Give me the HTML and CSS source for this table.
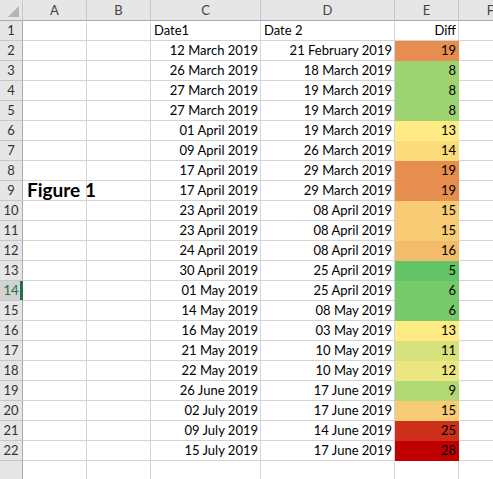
FILE: index.html
```html
<!DOCTYPE html>
<html>
<head>
<meta charset="utf-8">
<link rel="stylesheet" href="styles.css">
</head>
<body>
<div class="sheet">
  <div class="row head">
    <div class="c corner"><svg width="22" height="20" viewBox="0 0 22 20"><polygon points="19,6 19,17 8,17" fill="#b4b4b4"/></svg></div>
    <div class="c ch">A</div><div class="c ch">B</div><div class="c ch">C</div><div class="c ch">D</div><div class="c ch">E</div><div class="c ch">F</div>
  </div>
  <div class="row"><div class="c rh">1</div><div class="c"></div><div class="c"></div><div class="c">Date1</div><div class="c">Date 2</div><div class="c r">Diff</div><div class="c"></div></div>
  <div class="row"><div class="c rh">2</div><div class="c"></div><div class="c"></div><div class="c r">12 March 2019</div><div class="c r">21 February 2019</div><div class="c r fill v19">19</div><div class="c"></div></div>
  <div class="row"><div class="c rh">3</div><div class="c"></div><div class="c"></div><div class="c r">26 March 2019</div><div class="c r">18 March 2019</div><div class="c r fill v8">8</div><div class="c"></div></div>
  <div class="row"><div class="c rh">4</div><div class="c"></div><div class="c"></div><div class="c r">27 March 2019</div><div class="c r">19 March 2019</div><div class="c r fill v8">8</div><div class="c"></div></div>
  <div class="row"><div class="c rh">5</div><div class="c"></div><div class="c"></div><div class="c r">27 March 2019</div><div class="c r">19 March 2019</div><div class="c r fill v8">8</div><div class="c"></div></div>
  <div class="row"><div class="c rh">6</div><div class="c"></div><div class="c"></div><div class="c r">01 April 2019</div><div class="c r">19 March 2019</div><div class="c r fill v13">13</div><div class="c"></div></div>
  <div class="row"><div class="c rh">7</div><div class="c"></div><div class="c"></div><div class="c r">09 April 2019</div><div class="c r">26 March 2019</div><div class="c r fill v14">14</div><div class="c"></div></div>
  <div class="row"><div class="c rh">8</div><div class="c"></div><div class="c"></div><div class="c r">17 April 2019</div><div class="c r">29 March 2019</div><div class="c r fill v19">19</div><div class="c"></div></div>
  <div class="row"><div class="c rh">9</div><div class="c title">Figure 1</div><div class="c"></div><div class="c r">17 April 2019</div><div class="c r">29 March 2019</div><div class="c r fill v19">19</div><div class="c"></div></div>
  <div class="row"><div class="c rh">10</div><div class="c"></div><div class="c"></div><div class="c r">23 April 2019</div><div class="c r">08 April 2019</div><div class="c r fill v15">15</div><div class="c"></div></div>
  <div class="row"><div class="c rh">11</div><div class="c"></div><div class="c"></div><div class="c r">23 April 2019</div><div class="c r">08 April 2019</div><div class="c r fill v15">15</div><div class="c"></div></div>
  <div class="row"><div class="c rh">12</div><div class="c"></div><div class="c"></div><div class="c r">24 April 2019</div><div class="c r">08 April 2019</div><div class="c r fill v16">16</div><div class="c"></div></div>
  <div class="row"><div class="c rh">13</div><div class="c"></div><div class="c"></div><div class="c r">30 April 2019</div><div class="c r">25 April 2019</div><div class="c r fill v5">5</div><div class="c"></div></div>
  <div class="row"><div class="c rh sel">14</div><div class="c"></div><div class="c"></div><div class="c r">01 May 2019</div><div class="c r">25 April 2019</div><div class="c r fill v6">6</div><div class="c"></div></div>
  <div class="row"><div class="c rh">15</div><div class="c"></div><div class="c"></div><div class="c r">14 May 2019</div><div class="c r">08 May 2019</div><div class="c r fill v6">6</div><div class="c"></div></div>
  <div class="row"><div class="c rh">16</div><div class="c"></div><div class="c"></div><div class="c r">16 May 2019</div><div class="c r">03 May 2019</div><div class="c r fill v13">13</div><div class="c"></div></div>
  <div class="row"><div class="c rh">17</div><div class="c"></div><div class="c"></div><div class="c r">21 May 2019</div><div class="c r">10 May 2019</div><div class="c r fill v11">11</div><div class="c"></div></div>
  <div class="row"><div class="c rh">18</div><div class="c"></div><div class="c"></div><div class="c r">22 May 2019</div><div class="c r">10 May 2019</div><div class="c r fill v12">12</div><div class="c"></div></div>
  <div class="row"><div class="c rh">19</div><div class="c"></div><div class="c"></div><div class="c r">26 June 2019</div><div class="c r">17 June 2019</div><div class="c r fill v9">9</div><div class="c"></div></div>
  <div class="row"><div class="c rh">20</div><div class="c"></div><div class="c"></div><div class="c r">02 July 2019</div><div class="c r">17 June 2019</div><div class="c r fill v15">15</div><div class="c"></div></div>
  <div class="row"><div class="c rh">21</div><div class="c"></div><div class="c"></div><div class="c r">09 July 2019</div><div class="c r">14 June 2019</div><div class="c r fill v25">25</div><div class="c"></div></div>
  <div class="row"><div class="c rh">22</div><div class="c"></div><div class="c"></div><div class="c r">15 July 2019</div><div class="c r">17 June 2019</div><div class="c r fill v28">28</div><div class="c"></div></div>
  <div class="row"><div class="c rh"></div><div class="c"></div><div class="c"></div><div class="c"></div><div class="c"></div><div class="c"></div><div class="c"></div></div>
</div>
</body>
</html>
```
FILE: styles.css
```css
html, body {
  margin: 0;
  padding: 0;
  background: #fff;
  overflow: hidden;
}
.sheet {
  width: 523px;
  font-family: Lato, "Open Sans", sans-serif;
  font-size: 13px;
  color: #000;
}
.row {
  display: grid;
  grid-template-columns: 23px 64px 64px 110px 134px 64px 64px;
  height: 20px;
}
.row.head {
  height: 21px;
}
.c {
  box-sizing: border-box;
  border-right: 1px solid #d4d4d4;
  border-bottom: 1px solid #d4d4d4;
  padding: 0 2px 0 3px;
  line-height: 19px;
  white-space: nowrap;
  overflow: hidden;
}
.r {
  text-align: right;
}
.head .c {
  background: #e6e6e6;
  border-bottom-color: #ababab;
  border-right-color: #c8c8c8;
  text-align: center;
  color: #444;
  line-height: 21px;
  padding: 0;
}
.head .corner {
  padding: 0;
  line-height: 0;
}
.rh {
  background: #e6e6e6;
  border-right-color: #ababab;
  border-bottom-color: #c8c8c8;
  text-align: center;
  color: #333;
  padding: 0;
}
.rh.sel {
  background: #d2d2d2;
  color: #217346;
  box-shadow: inset -2px 0 0 #217346;
  border-right-color: #217346;
}
.title {
  overflow: visible;
  font-weight: 700;
  font-size: 19px;
  line-height: 17px;
  padding-left: 4px;
  position: relative;
  z-index: 1;
}
.fill {
  border-right-color: transparent;
  border-bottom-color: transparent;
}
.v5 { background: #63c565; }
.v6 { background: #77ca69; }
.v8 { background: #9ed371; }
.v9 { background: #b1d874; }
.v11 { background: #d8e27c; }
.v12 { background: #ece680; }
.v13 { background: #ffeb84; }
.v14 { background: #fbdb7b; }
.v15 { background: #f7cb73; }
.v16 { background: #f2bc6a; }
.v19 { background: #e68d4f; }
.v25 { background: #cd2f1a; }
.v28 { background: #c00000; }
```
